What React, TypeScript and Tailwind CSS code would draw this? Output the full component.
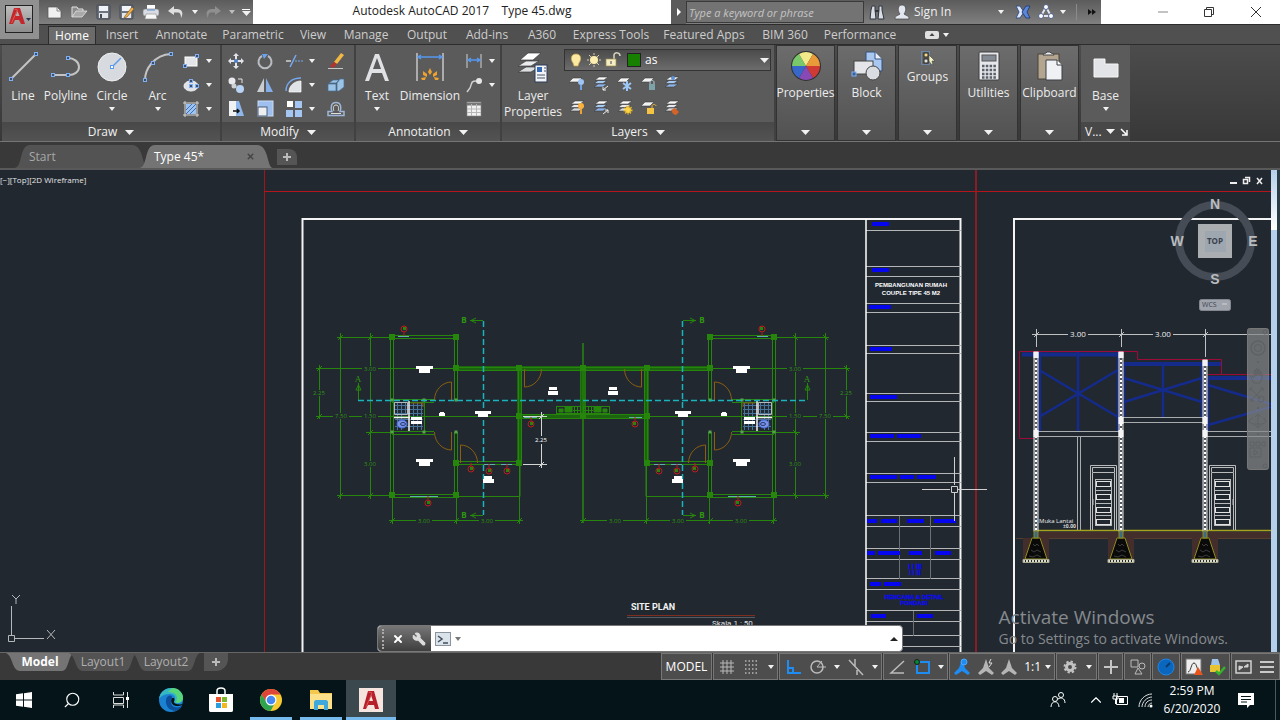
import type { ReactNode } from "react";
import { ChevronUp, Search, Wrench, X } from "lucide-react";

type Kids = { children: ReactNode };

function Icon({ size = 18, children }: Kids & { size?: number }) {
  return (
    <svg width={size} height={size} viewBox={`0 0 ${size} ${size}`} fill="none" className="shrink-0" aria-hidden="true">
      {children}
    </svg>
  );
}

function Caret({ wide = false }: { wide?: boolean }) {
  return (
    <svg width={wide ? 9 : 6} height={wide ? 5 : 4} viewBox="0 0 6 4" preserveAspectRatio="none" className="shrink-0" aria-hidden="true">
      <path d="M0 0h6L3 4z" fill="#f2f2f2" />
    </svg>
  );
}

/* ---------- small shapes shared by the ribbon icons ---------- */

function Grip({ x, y }: { x: number; y: number }) {
  return <rect x={x - 1.5} y={y - 1.5} width="3" height="3" fill="#3c4f70" stroke="#7fb0f5" />;
}

function Sheets({ blue = false }: { blue?: boolean }) {
  return (
    <g stroke="#3c3c3c" strokeWidth="0.6">
      <path d="M2 13l4-3h9l-4 3z" fill={blue ? "#8db4e8" : "#d5d9de"} />
      <path d="M2 9.500l4-3h9l-4 3z" fill={blue ? "#a9c8ef" : "#e6e8eb"} />
      <path d="M3 6l4-3h9l-4 3z" fill="#fafafa" />
    </g>
  );
}

function Sheet() {
  return <path d="M1 8l4-4h9l-4 4z" fill="#f2f2f2" stroke="#3c3c3c" strokeWidth="0.6" />;
}

/* ---------- title bar ---------- */

const quickAccess: { name: string; icon: ReactNode }[] = [
  {
    name: "New",
    icon: <Icon><path d="M2 4h9l4 4v7H2z" fill="#f0f0f0" stroke="#555" strokeWidth="0.7" /><path d="M11 4v4h4" stroke="#8a8a8a" /></Icon>,
  },
  {
    name: "Open",
    icon: <Icon><path d="M2 14V4h5l1 2h5v3" fill="#8b8b8b" stroke="#e2e2e2" /><path d="M2 14l4-6h11l-5 6z" fill="#a9a9a9" stroke="#ececec" strokeWidth="0.7" /></Icon>,
  },
  {
    name: "Save",
    icon: <Icon><rect x="3" y="2" width="13" height="14" rx="1" fill="#6e7580" stroke="#454b55" /><rect x="5" y="3" width="9" height="5" fill="#f0f3f8" /><rect x="5" y="10" width="9" height="5" fill="#e3e6ea" /><path d="M7 11v4" stroke="#454b55" strokeWidth="2" /></Icon>,
  },
  {
    name: "Save As",
    icon: <Icon><rect x="2" y="2" width="13" height="14" rx="1" fill="#6e7580" stroke="#454b55" /><rect x="4" y="3" width="9" height="5" fill="#f0f3f8" /><rect x="4" y="10" width="9" height="5" fill="#e3e6ea" /><path d="M7 13l7-9 2 2-7 8-3 1z" fill="#efb046" stroke="#7b501c" strokeWidth="0.6" /></Icon>,
  },
  {
    name: "Plot",
    icon: <Icon><path d="M5 2h8v5H5z" fill="#fff" /><rect x="1" y="6" width="16" height="7" rx="2" fill="#d9dde3" stroke="#777" strokeWidth="0.6" /><path d="M4 11h10l1 5H3z" fill="#f7f7f7" stroke="#888" strokeWidth="0.6" /><path d="M5 7h8" stroke="#5d8ad0" /></Icon>,
  },
  {
    name: "Undo",
    icon: <Icon><path d="M8 3L2 8l6 4V9.500h4c2 0 3 2 3 5.500 3-5 1-9-4-9H8z" fill="#dedede" /></Icon>,
  },
];

function TitleBar() {
  return (
    <div className="flex h-6 items-stretch bg-white">
      <div className="flex shrink-0 items-center bg-gradient-to-b from-[#5c5c5c] to-[#808080] pl-1">
        {quickAccess.map((q) => (
          <button key={q.name} aria-label={q.name} className="flex w-6 justify-center">
            {q.icon}
          </button>
        ))}
        <button aria-label="Undo list" className="flex w-4 justify-center"><Caret /></button>
        <button aria-label="Redo" className="flex w-5 justify-center">
          <Icon><path d="M11 3l6 5-6 4V9.500H7c-2 0-3 2-3 5.500C1 10 3 6 8 6h3z" fill="#8f8f8f" /></Icon>
        </button>
        <button aria-label="Redo list" className="flex w-3 justify-end opacity-60"><Caret /></button>
        <button aria-label="Customize toolbar" className="flex w-[18px] flex-col items-center gap-px pl-1">
          <span className="h-px w-2 bg-white" />
          <Caret wide />
        </button>
      </div>
      <h1 className="flex-1 text-center text-[12px] leading-[22px] whitespace-pre text-[#222]">Autodesk AutoCAD 2017    Type 45.dwg</h1>
      <div className="flex w-[430px] shrink-0 items-center bg-gradient-to-b from-[#5c5c5c] to-[#808080]">
        <button aria-label="Collapse search" className="flex h-full w-[15px] items-center justify-center bg-[#5b5b5b]">
          <Icon size={8}><path d="M2 0l4 4-4 4z" fill="#fff" /></Icon>
        </button>
        <input
          aria-label="Search"
          placeholder="Type a keyword or phrase"
          className="h-[22px] w-[178px] border border-[#3a3a3a] bg-[#737373] px-[2px] text-[11px] italic text-white placeholder:text-[#c4c4c4]"
        />
        <button aria-label="Find" className="ml-1">
          <Icon size={18}>
            <path d="M4 3h3v4l1 9H2l1-9zM11 3h3v4l2 9h-6l1-9z" fill="#dadde3" stroke="#31363f" />
            <path d="M7 8h4" stroke="#31363f" strokeWidth="2" />
          </Icon>
        </button>
        <button className="ml-[7px] flex items-center gap-[3px] text-[12px] text-[#f0f0f0]">
          <Icon>
            <path d="M2 16c0-4 3-3 5-5C4 7 5 2 9 2s5 5 2 9c2 2 5 1 5 5z" fill="#e2e6ee" stroke="#444" strokeWidth="0.7" />
          </Icon>
          Sign In
        </button>
        <div className="flex-1" />
        <Caret />
        <button aria-label="Exchange" className="ml-[10px]">
          <Icon>
            <path d="M2 3h4l4 6-4 6H2l3-6z" fill="#dfe8f8" stroke="#34508c" />
            <path d="M16 3h-4L8 9l4 6h4l-3-6z" fill="#5c86d8" stroke="#27417c" />
          </Icon>
        </button>
        <button aria-label="A360" className="mx-[5px]">
          <Icon>
            <path d="M9 4l5 9H4z" stroke="#dfe6f5" strokeWidth="2" />
            <circle cx="9" cy="4" r="2.500" fill="#fff" stroke="#4d628e" />
            <circle cx="4" cy="13" r="2.500" fill="#fff" stroke="#4d628e" />
            <circle cx="14" cy="13" r="2.500" fill="#fff" stroke="#4d628e" />
          </Icon>
        </button>
        <Caret />
        <span className="mx-[10px] h-4 w-px bg-[#8b8b8b]" />
        <button aria-label="More" className="mr-1">
          <Icon size={10}><path d="M1 2l4 3-4 3zM5 2l4 3-4 3z" fill="#111" /></Icon>
        </button>
      </div>
      <div className="flex w-[179px] shrink-0 items-center justify-end text-[#333]">
        <button aria-label="Minimize" className="flex w-[46px] justify-center"><Icon size={12}><path d="M1 6h10" stroke="#888" /></Icon></button>
        <button aria-label="Restore" className="flex w-[46px] justify-center">
          <Icon size={12}><path d="M1.500 3.500h7v7h-7zM3.500 3.500v-2h7v7h-2" stroke="#333" /></Icon>
        </button>
        <button aria-label="Close" className="flex w-[48px] justify-center"><Icon size={12}><path d="M1 1l10 10M11 1L1 11" stroke="#333" /></Icon></button>
      </div>
    </div>
  );
}

const ribbonTabs = [
  { name: "Insert", width: "w-[52px]" },
  { name: "Annotate", width: "w-[67px]" },
  { name: "Parametric", width: "w-[76px]" },
  { name: "View", width: "w-[44px]" },
  { name: "Manage", width: "w-[62px]" },
  { name: "Output", width: "w-[60px]" },
  { name: "Add-ins", width: "w-[60px]" },
  { name: "A360", width: "w-[50px]" },
  { name: "Express Tools", width: "w-[88px]" },
  { name: "Featured Apps", width: "w-[98px]" },
  { name: "BIM 360", width: "w-[64px]" },
  { name: "Performance", width: "w-[86px]" },
];

function Header() {
  return (
    <header className="flex shrink-0 bg-[#505050]">
      <div className="h-[39px] w-[39px] shrink-0 bg-[#909090] p-[5px]">
        <button aria-label="Application menu" className="flex h-7 w-7 items-center border border-[#222] bg-gradient-to-b from-[#bdbdbd] to-[#8d8d8d]">
          <Icon size={26}>
            <path d="M3 18L8 2h6l5 16h-4l-2-4H9l-2 4z" fill="#c3262c" />
            <path d="M9.500 10l2-5 2 5z" fill="#b0b0b0" />
            <path d="M8.500 3l3 1-6 13" stroke="#e05a55" />
            <path d="M20 12h5l-2.500 3z" fill="#27324a" />
          </Icon>
        </button>
      </div>
      <div className="min-w-0 flex-1">
        <TitleBar />
        <nav className="flex h-5 items-end border-t border-[#2c2c2c] pl-[9px] text-[12px] leading-[18px] text-[#cdcdcd]">
          <button className="h-[18px] w-12 border border-b-0 border-[#2c2c2c] bg-[#6b6b6b] leading-4 text-white">Home</button>
          {ribbonTabs.map((t) => (
            <button key={t.name} className={`h-[18px] whitespace-nowrap ${t.width}`}>{t.name}</button>
          ))}
          <button aria-label="Ribbon display" className="ml-[22px] flex h-[18px] items-center gap-1">
            <Icon size={14}><rect y="3" width="14" height="8" rx="2" fill="#e0e0e0" /><path d="M7 5l2.500 3h-5z" fill="#444" /></Icon>
            <Caret />
          </button>
        </nav>
      </div>
    </header>
  );
}

/* ---------- ribbon ---------- */

function Panel({ title, width, children }: Kids & { title: string; width: string }) {
  return (
    <section className={`flex shrink-0 flex-col border-r-2 border-[#414141] bg-[#5b5b5b] ${width}`}>
      <div className="flex flex-1 pt-1">{children}</div>
      <button className="flex h-[19px] items-center justify-center gap-2 bg-gradient-to-b from-[#484848] to-[#535353] pt-px text-[12px] text-[#f0f0f0]">
        {title} <Caret wide />
      </button>
    </section>
  );
}

function BigTool({ label, width, caret, children }: Kids & { label: string; width: string; caret?: boolean }) {
  return (
    <button className={`flex shrink-0 flex-col items-center pt-[2px] text-[12px] text-[#ececec] ${width}`}>
      {children}
      <span className="mt-[5px] leading-4">{label}</span>
      {caret && <span className="mt-[3px] flex"><Caret /></span>}
    </button>
  );
}

function Tool({ name, caret, children }: Kids & { name: string; caret?: boolean }) {
  return (
    <button aria-label={name} className="flex h-6 items-center gap-1.5">
      <Icon>{children}</Icon>
      {caret && <Caret />}
    </button>
  );
}

function DrawPanel() {
  return (
    <Panel title="Draw" width="w-[220px]">
      <BigTool label="Line" width="w-[42px]">
        <Icon size={32}><path d="M4 28L29 3" stroke="#c4c4c4" strokeWidth="2" /><Grip x={4} y={28} /><Grip x={29} y={3} /></Icon>
      </BigTool>
      <BigTool label="Polyline" width="w-[43px]">
        <Icon size={32}>
          <path d="M3 24h16c5 0 10-3 10-8s-5-9-11-9" stroke="#c4c4c4" strokeWidth="2" />
          <Grip x={3} y={24} /><Grip x={18} y={24} /><Grip x={18} y={7} />
        </Icon>
      </BigTool>
      <BigTool label="Circle" width="w-[50px]" caret>
        <Icon size={32}>
          <circle cx="16" cy="16" r="14" fill="#d7dade" stroke="#eef0f2" />
          <path d="M16 16l9-9" stroke="#5b9bea" strokeWidth="1.500" />
          <rect x="14.500" y="14.500" width="3" height="3" fill="#fff" stroke="#5b9bea" />
        </Icon>
      </BigTool>
      <BigTool label="Arc" width="w-[41px]" caret>
        <Icon size={32}>
          <path d="M3 29C3 18 12 4 29 3" stroke="#c4c4c4" strokeWidth="2" />
          <Grip x={3} y={29} /><Grip x={11} y={12} /><Grip x={29} y={3} />
        </Icon>
      </BigTool>
      <div className="ml-1">
        <Tool name="Rectangle" caret><rect x="3" y="5" width="12" height="9" fill="#e3e5e8" stroke="#fff" /><Grip x={3} y={14} /><Grip x={15} y={4} /></Tool>
        <Tool name="Ellipse" caret><ellipse cx="9" cy="10" rx="7" ry="5" fill="#dfe2e6" stroke="#f3f3f3" /><Grip x={9} y={5} /><Grip x={9} y={10} /><Grip x={15} y={10} /></Tool>
        <Tool name="Hatch" caret>
          <rect x="4" y="4" width="10" height="10" fill="#9fc3ef" />
          <path d="M4 10l6-6M4 14L14 4M8 14l6-6" stroke="#3d6fb8" />
          <path d="M3 1v16M15 1v16M1 3h16M1 15h16" stroke="#d6d6d6" />
        </Tool>
      </div>
    </Panel>
  );
}

function ModifyPanel() {
  return (
    <Panel title="Modify" width="w-[134px]">
      <div className="grid h-[72px] grid-cols-[29px_29px_42px_24px] pl-[5px]">
        <Tool name="Move"><path d="M9 1l3 3h-2v4h4V6l3 3-3 3v-2h-4v4h2l-3 3-3-3h2v-4H4v2L1 9l3-3v2h4V4H6z" fill="#e0e3e8" /><circle cx="9" cy="9" r="2" fill="#4e7fc8" /></Tool>
        <Tool name="Rotate"><path d="M6 4a6.500 6.500 0 1 0 6 0" stroke="#b9bcc1" strokeWidth="2" /><path d="M6 2h6l-4 5z" fill="#6ba2ef" /></Tool>
        <Tool name="Trim" caret><path d="M1 9h5" stroke="#d5d5d5" strokeWidth="1.500" /><path d="M10 9h8" stroke="#77a9ef" strokeDasharray="2 1" /><path d="M5 15L11 3" stroke="#77a9ef" strokeWidth="1.500" /></Tool>
        <Tool name="Erase"><path d="M7 10l7-9 3 2-7 9z" fill="#f1b944" /><path d="M3 14l4-4 3 2-4 4z" fill="#b4332c" /><path d="M1 16.500h15" stroke="#c7c7c7" /></Tool>
        <Tool name="Copy"><circle cx="5" cy="5" r="3.500" fill="#e8eaed" /><circle cx="13" cy="13" r="4" fill="#b9d3f4" /><circle cx="7" cy="10" r="2.500" fill="#cfd2d6" /><path d="M11 3h4v4" stroke="#e6e6e6" /></Tool>
        <Tool name="Mirror"><path d="M8 2v14H1z" fill="#c9ccd0" /><path d="M10 2v14h7z" fill="#85aee8" /></Tool>
        <Tool name="Fillet" caret><path d="M1 15C1 7 7 2 16 2" stroke="#75a7ee" strokeWidth="1.500" /><path d="M4 16C4 10 9 5 16 5v11z" fill="#dfe2e6" stroke="#fff" strokeWidth="0.700" /></Tool>
        <Tool name="Explode"><path d="M2 7l4-3h6l-3 3zM1 8h8v7H1zM10 7l3-4h4v8l-5 4h-2z" fill="#9bc3e6" stroke="#456f94" strokeWidth="0.700" /></Tool>
        <Tool name="Stretch"><path d="M2 1h7v15H2z" fill="#f0f1f3" /><path d="M9 1h3l5 15H9z" fill="#8fb7ec" /><path d="M6 11h6M10 9l2 2-2 2" stroke="#111" strokeWidth="1.500" /></Tool>
        <Tool name="Scale"><rect x="2" y="1" width="15" height="15" fill="#9fc0ee" stroke="#ccdcf3" /><rect x="2" y="7" width="9" height="9" fill="#eceef0" stroke="#4a5d7a" /></Tool>
        <Tool name="Array" caret><rect x="2" y="1" width="6" height="6" fill="#fff" /><rect x="10" y="1" width="7" height="7" fill="#a5c6f2" /><rect x="1" y="10" width="7" height="7" fill="#a5c6f2" /><rect x="10" y="10" width="7" height="7" fill="#a5c6f2" /></Tool>
        <Tool name="Offset"><path d="M1 15.500h16v-4h-4c1-2 2-9-4-9s-5 7-4 9H1z" stroke="#9fb6d6" strokeWidth="1.500" /><path d="M4 13.500h10M7 11c-1-2-1-6 2-6s3 4 2 6" stroke="#ddd" /></Tool>
      </div>
    </Panel>
  );
}

function AnnotationPanel() {
  return (
    <Panel title="Annotation" width="w-[146px]">
      <BigTool label="Text" width="w-[42px]" caret>
        <Icon size={32}><path d="M4 30L14 3h4l10 27h-4l-3-8H11l-3 8zM12 18h8L16 7z" fill="#dfe1e4" fillRule="evenodd" /></Icon>
      </BigTool>
      <BigTool label="Dimension" width="w-[64px]">
        <Icon size={32}>
          <path d="M3 2v28M29 2v28" stroke="#c8c8c8" strokeWidth="1.500" />
          <path d="M4 6h24M7 4L4 6l3 2M25 4l3 2-3 2" stroke="#5698ef" strokeWidth="1.500" />
          <path d="M16 17l2 4-2 3-2-3zM9 20l4 3v3l-4-2zM23 20l-4 3v3l4-2zM7 27l5-1-1 3H8zM25 27l-5-1 1 3h3z" fill="#efa22e" />
        </Icon>
      </BigTool>
      <div className="ml-[3px]">
        <Tool name="Linear" caret><path d="M2 2v14M16 2v14" stroke="#d2d2d2" /><path d="M3 8h12M6 6L3 8l3 2M12 6l3 2-3 2" stroke="#5698ef" strokeWidth="1.500" /></Tool>
        <Tool name="Leader" caret><circle cx="14" cy="5" r="3" fill="#e7e7e7" /><path d="M11 5c-5 0-4 2-6 7l-3 4" stroke="#cfcfcf" strokeWidth="1.500" /></Tool>
        <Tool name="Table"><rect x="2" y="2" width="14" height="14" fill="#f1f1f1" stroke="#888" strokeWidth="0.600" /><path d="M2 4h14" stroke="#777" strokeWidth="3" /><path d="M2 9h14M2 12.500h14M6.500 4v12M11.500 4v12" stroke="#b5b5b5" /></Tool>
      </div>
    </Panel>
  );
}

function LayersPanel() {
  return (
    <Panel title="Layers" width="w-[274px]">
      <BigTool label="Layer Properties" width="w-[62px]">
        <Icon size={32}>
          <g stroke="#3b3b3b" strokeWidth="0.700">
            <path d="M1 21l8-5h13l-8 5z" fill="#dcdfe2" />
            <path d="M1 15l8-5h13l-8 5z" fill="#e9ebed" />
            <path d="M3 9l8-7h13l-8 7z" fill="#fff" />
          </g>
          <rect x="18" y="14" width="12" height="17" fill="#f2f4f7" stroke="#2d3d57" />
          <rect x="20" y="16" width="5" height="5" fill="#3469b5" />
          <path d="M27 17h2M27 20h2M20 24h8M20 27h8" stroke="#46556c" />
        </Icon>
      </BigTool>
      <div className="min-w-0 flex-1 pr-[3px]">
        <div className="flex h-[22px] items-center gap-1 border border-[#333] bg-gradient-to-b from-[#4b4b4b] to-[#6c6c6c] pr-px pl-1 text-white">
          <Icon size={14}><path d="M4 10C1 6 2 1 7 1s6 5 3 9l-1 3H5z" fill="#fbe9a3" stroke="#c5a447" strokeWidth="0.700" /></Icon>
          <Icon size={14}><circle cx="7" cy="7" r="4" fill="#fbeeb0" /><path d="M7 0v2M7 12v2M0 7h2M12 7h2M2 2l2 2M10 10l2 2M12 2l-2 2M2 12l2-2" stroke="#d9d1a2" /></Icon>
          <Icon size={18}><path d="M9 8V4c0-3 6-3 6 1" stroke="#d9d4bd" strokeWidth="1.500" /><rect x="1" y="8" width="10" height="7" fill="#f5eec5" stroke="#9c8d4c" strokeWidth="0.700" /><path d="M6 10v3" stroke="#444" /></Icon>
          <span className="h-[14px] w-[14px] border border-[#222] bg-[#178000]" />
          <select aria-label="Current layer" className="h-5 flex-1 appearance-none bg-transparent text-[12px] text-white">
            <option>as</option>
          </select>
          <Caret wide />
        </div>
        <div className="grid grid-cols-[24px_24px_24px_23px_24px] pl-1">
          <Tool name="Layer off"><Sheet /><circle cx="13" cy="8" r="3" fill="#9ec5f5" /><path d="M13 11v5" stroke="#6fa1e8" strokeWidth="2" /></Tool>
          <Tool name="Isolate layer"><Sheets blue /><path d="M16 12l-5 4M11 13v3h3" stroke="#eee" /></Tool>
          <Tool name="Freeze layer"><Sheet /><path d="M11 7v10M7 9l8 6M15 9l-8 6" stroke="#9cc6f5" strokeWidth="2" /></Tool>
          <Tool name="Lock layer"><Sheet /><path d="M10 10V8c0-2 4-2 4 0v2" stroke="#b6cbd2" /><rect x="9" y="10" width="6" height="6" fill="#7da3aa" /></Tool>
          <Tool name="Make current"><Sheets blue /><circle cx="10" cy="4" r="2" fill="#5d92de" /></Tool>
          <Tool name="Turn all on"><Sheets /><circle cx="13" cy="8" r="3" fill="#fbb13c" /><path d="M13 11v5" stroke="#f0a02e" strokeWidth="2" /></Tool>
          <Tool name="Unisolate layer"><Sheets blue /><path d="M11 16l5-4M13 12h3v3" stroke="#eee" /></Tool>
          <Tool name="Thaw all"><Sheets /><circle cx="12" cy="12" r="3" fill="#ffd94a" stroke="#f3c02b" strokeDasharray="1 1" strokeWidth="3" /></Tool>
          <Tool name="Unlock layer"><Sheet /><path d="M12 10V8c0-2 4-2 4 0" stroke="#e2b53a" /><rect x="7" y="10" width="7" height="6" fill="#f4c343" /></Tool>
          <Tool name="Match layer"><Sheets /><path d="M8 12l4-2 4 4-3 3c-2 0-4-2-5-5z" fill="#d2642a" /></Tool>
        </div>
      </div>
    </Panel>
  );
}

const wheel = [
  { d: "M0 0L-14 0A14 14 0 0 1 -7 -12Z", fill: "#79c86a" },
  { d: "M0 0L-7 -12A14 14 0 0 1 7 -12Z", fill: "#f2e98a" },
  { d: "M0 0L7 -12A14 14 0 0 1 14 0Z", fill: "#eb9a3a" },
  { d: "M0 0L14 0A14 14 0 0 1 7 12Z", fill: "#cf3a34" },
  { d: "M0 0L7 12A14 14 0 0 1 -7 12Z", fill: "#8949b5" },
  { d: "M0 0L-14 0A14 14 0 0 0 -7 12Z", fill: "#3767c9" },
];

const collapsed: { name: string; icon: ReactNode }[] = [
  {
    name: "Properties",
    icon: (
      <Icon size={32}>
        <circle cx="16" cy="16" r="15" fill="#303030" />
        <g transform="translate(16 16)">{wheel.map((w) => <path key={w.fill} d={w.d} fill={w.fill} />)}</g>
      </Icon>
    ),
  },
  {
    name: "Block",
    icon: (
      <Icon size={32}>
        <path d="M15 2h9l7 7v12H15z" fill="#a9c8f1" stroke="#33507c" /><path d="M24 2v7h7" fill="#e9f0fb" stroke="#33507c" />
        <rect x="3" y="11" width="19" height="13" fill="#e3e5e9" stroke="#444" /><circle cx="22" cy="23" r="7" fill="#d9dce0" stroke="#444" />
        <rect x="1" y="22" width="4" height="4" fill="#3c5f94" stroke="#7fb0f5" />
      </Icon>
    ),
  },
  {
    name: "Groups",
    icon: (
      <Icon size={16}>
        <rect x="1.500" y="1.500" width="8" height="13" stroke="#6fa4ea" strokeDasharray="1 1" />
        <rect x="4" y="3" width="4" height="4" fill="#f3d98c" stroke="#222" /><rect x="4" y="9" width="4" height="4" fill="#e4e4e4" stroke="#222" />
        <path d="M9 5l6 6h-3l1 4-2-1-2-3z" fill="#f5f2c4" stroke="#444" strokeWidth="0.600" />
      </Icon>
    ),
  },
  {
    name: "Utilities",
    icon: (
      <Icon size={32}>
        <rect x="6" y="2" width="20" height="28" rx="1" fill="#e6e7ea" stroke="#3e3e3e" />
        <rect x="9" y="5" width="14" height="6" fill="#858b95" stroke="#555" />
        <path d="M9 16h14M9 20h14M9 24h14M9 27.500h14" stroke="#5a5f68" strokeWidth="2.500" strokeDasharray="2.500 1.300" />
      </Icon>
    ),
  },
  {
    name: "Clipboard",
    icon: (
      <Icon size={32}>
        <rect x="4" y="4" width="21" height="25" fill="#b3a58f" stroke="#4a453c" /><path d="M9 5c0-2 3-1 4-3h3c1 2 4 1 4 3z" fill="#eee" stroke="#444" />
        <path d="M12 10h11l5 5v15H12z" fill="#eff1f4" stroke="#3b3f46" /><path d="M23 10v5h5" fill="#fff" stroke="#3b3f46" />
      </Icon>
    ),
  },
];

function Ribbon() {
  return (
    <div className="flex h-[98px] shrink-0 border-y border-t-[#2c2c2c] border-b-[#757575] bg-gradient-to-b from-[#4c4c4c] to-[#383838] pl-[2px]">
      <DrawPanel />
      <ModifyPanel />
      <AnnotationPanel />
      <LayersPanel />
      {collapsed.map((c) => (
        <button
          key={c.name}
          className="mr-[2px] flex w-[59px] shrink-0 flex-col items-center border border-[#333] bg-gradient-to-b from-[#6c6c6c] to-[#525252] pt-1 pb-[5px] text-[12px] text-[#ececec]"
        >
          {c.icon}
          <span className="mt-[3px] leading-4">{c.name}</span>
          <span className="flex-1" />
          <Caret wide />
        </button>
      ))}
      <section className="flex w-[49px] shrink-0 flex-col bg-[#5b5b5b]">
        <div className="flex flex-1 justify-center pt-1">
          <BigTool label="Base" width="w-[46px]" caret>
            <Icon size={32}><path d="M4 8h11v5h13v13H4z" fill="#e3e4e8" stroke="#f6f6f6" /></Icon>
          </BigTool>
        </div>
        <div className="flex h-[19px] items-center gap-1 bg-[#484848] pl-1 text-[12px] text-[#f0f0f0]">
          V... <Caret wide />
          <Icon size={10}><path d="M2 2l5 5M8 3v5H3" stroke="#fff" strokeWidth="1.500" /></Icon>
        </div>
      </section>
    </div>
  );
}

/* ---------- file tabs ---------- */

function FileTab({ label, active }: { label: string; active?: boolean }) {
  return (
    <button className={`relative -ml-[9px] flex h-[23px] w-[134px] items-center justify-between pr-[18px] pl-[15px] text-[12px] ${active ? "text-white" : "text-[#a8a8a8]"}`}>
      <svg viewBox="0 0 134 22" preserveAspectRatio="none" className="absolute inset-0 h-full w-full" aria-hidden="true">
        <path d="M0 22C9 22 5 0 16 0h102c12 0 10 22 16 22z" fill={active ? "#747474" : "#535353"} />
      </svg>
      <span className="relative">{label}</span>
      {active && <X size={9} strokeWidth={4} className="relative text-[#444]" />}
    </button>
  );
}

function FileTabs() {
  return (
    <div className="flex h-7 shrink-0 items-end border-b-2 border-[#595959] bg-[#393939] pl-[23px]">
      <FileTab label="Start" />
      <FileTab label="Type 45*" active />
      <button aria-label="New drawing" className="mb-[3px] ml-1 flex h-4 w-5 items-center justify-center rounded-tr-lg bg-[#555]">
        <Icon size={10}><path d="M5 1v8M1 5h8" stroke="#bbb" strokeWidth="2" /></Icon>
      </button>
    </div>
  );
}

/* ---------- model space ---------- */

const GREEN = "#26860c";
const columns = [[392, 337], [456, 337], [456, 368], [519, 368], [519, 416], [583, 368], [583, 416], [456, 463], [519, 463], [392, 495], [456, 495]];
const smallColumns = [[392, 400], [424, 400], [456, 400], [392, 432], [424, 432], [456, 432]];
const lamps = [[404, 329, 7], [531, 424, -7], [471, 469, -6], [489, 471, -7], [507, 471, -7], [428, 503, -7]];
const roomLabels = [
  [416, 366, 17, 3], [419, 369, 11, 4], [549, 387, 8, 3], [548, 391, 10, 4], [475, 411, 16, 3], [478, 414, 10, 3],
  [440, 412, 4, 2], [439, 413, 6, 3], [416, 459, 17, 3], [419, 462, 11, 4], [484, 476, 8, 4], [483, 479, 11, 4],
  [411, 417, 11, 3], [411, 421, 11, 3],
];

// One dwelling; the neighbour is the same plan mirrored on the party wall.
function House() {
  return (
    <g fill="none" stroke={GREEN}>
      <path d="M319.500 365v54M340.500 333v166M370.500 333v166M337 337.500h55M316 368.500h140M316 416.500h203M366 432.500h26M337 495.500h55" />
      <path d="M392.500 498v26M456.500 498v26M519.500 465v59M456 496.500h64v-33" />
      <path d="M317 371l5-5M317 419l5-5M338 340l5-5M338 498l5-5M368 340l5-5M368 371l5-5M368 435l5-5M368 498l5-5" />
      <path d="M390.500 337v158M393.500 337v158M454.500 337v63M457.500 337v63M454.500 432v63M457.500 432v63M392 335.500h64M392 338.500h64M392 494.500h64M392 497.500h64M392 399.500h42M392 402.500h42M392 431.500h42M392 434.500h42M424.500 400v32M456 461.500h63M456 464.500h63" />
      <path d="M456 368.500h127M519.500 368v95M519 416.500h64M582.500 368v48" strokeWidth="5" stroke="#1d6410" />
      <path d="M456 367.500h127M456 370.500h127M518.500 368v95M521.500 368v95M519 414.500h64M519 418.500h64M583 343v180M581 368v48" />
      <rect x="556.500" y="406.500" width="26" height="7" />
      <path d="M559 409h4v3h-4zM565 407h7v5h-7z" fill={GREEN} />
      <path d="M574.500 407v6M577.500 407v6M580.500 407v6M573 410.500h10" />
      <g fill={GREEN} stroke="none">
        {columns.map(([x, y]) => <rect key={`${x}-${y}`} x={x - 3} y={y - 3} width="6" height="6" />)}
      </g>
      <g fill="#5aa24c" stroke="none">
        {smallColumns.map(([x, y]) => <rect key={`${x}-${y}`} x={x - 1.500} y={y - 1.500} width="3" height="3" />)}
      </g>
      {/* bathroom */}
      <path d="M395 405.500h28M395 409.500h28M395 413.500h28M397.500 403v27M401.500 403v27M405.500 403v12M413.500 403v27M417.500 403v27M421.500 403v27M395 419.500h28M395 426.500h28" stroke="#47729c" />
      <path d="M394.500 402.500h13v12h-13z" stroke="#b5b9bd" />
      <path d="M409 401v30M394 417.500h16" stroke="#f0f0f0" strokeWidth="1.500" />
      <ellipse cx="402" cy="424" rx="5" ry="4" fill="#7a92e8" stroke="#4566d8" />
      <ellipse cx="403" cy="424" rx="2.500" ry="1.500" stroke="#26386e" />
      {/* doors */}
      <path d="M451.500 400v-18c-9 0-17 8-17 18M451.500 432v18c-9 0-17-8-17-18M460.500 463v-18c9 0 17 8 17 18M524.500 369v18c9 0 17-8 17-18M411 403h12v4" stroke="#8a5f10" />
      {/* windows */}
      <path d="M398 336.500h11M524 417.500h13M484 464.500h11M501 464.500h11M410 496.500h28" stroke="#5fb0b0" />
      {lamps.map(([x, y, stem]) => (
        <g key={`${x}-${y}`}>
          <circle cx={x} cy={y} r="3" stroke="#c21a1a" />
          <rect x={x - 1} y={y - 2} width="3" height="3" fill={GREEN} stroke="none" />
          <path d={`M${x} ${y + stem / 2}v${stem / 2}`} stroke="#c21a1a" />
        </g>
      ))}
      {/* section marks */}
      <path d="M483.500 321v194" stroke="#1bb4bc" strokeWidth="1.500" strokeDasharray="6 3" />
      <path d="M470 320.500h13M470 515.500h13M476 318l-5 2.500 5 2.500M476 513l-5 2.500 5 2.500M358.500 400v-17M356 390l2.500-5 2.500 5z" />
      <g fill="#fff" stroke="none">
        {roomLabels.map(([x, y, w, h]) => <rect key={`${x}-${y}`} x={x} y={y} width={w} height={h} />)}
      </g>
    </g>
  );
}

const dimTexts: [number, number, string][] = [
  [370, 369, "3.00"], [319, 393, "2.25"], [341, 416, "7.50"], [370, 416, "1.50"], [370, 464, "3.00"], [424, 521, "3.00"], [487, 521, "3.00"],
  [795, 369, "3.00"], [846, 393, "2.25"], [825, 416, "7.50"], [795, 416, "1.50"], [795, 464, "3.00"], [615, 521, "3.00"], [678, 521, "3.00"], [741, 521, "3.00"],
];

function FloorPlan() {
  return (
    <g>
      <House />
      <g transform="translate(1166 0) scale(-1 1)"><House /></g>
      <path d="M358 400.500h450" stroke="#1bb4bc" strokeWidth="1.500" strokeDasharray="6 3" />
      <path d="M389 520.500h134M580 520.500h197M390 523l5-5M454 523l5-5M517 523l5-5M581 523l5-5M644 523l5-5M708 523l5-5M771 523l5-5" stroke={GREEN} />
      <g fontSize="6" textAnchor="middle" fill="#2f960f">
        {dimTexts.map(([x, y, t]) => (
          <g key={`${x}-${y}`}>
            <rect x={x - 8} y={y - 3} width="16" height="6" fill="#212830" />
            <text x={x} y={y + 2}>{t}</text>
          </g>
        ))}
        <g fontSize="8" fontWeight="bold">
          <text x="464" y="323">B</text><text x="464" y="518">B</text><text x="702" y="323">B</text><text x="702" y="518">B</text>
        </g>
        <g fontSize="9" fontFamily="Liberation Serif, serif">
          <text x="358" y="382">A</text><text x="807" y="382">A</text>
        </g>
      </g>
      <path d="M541.500 412v56M523 416.500h24M523 464.500h24M539 419l5-5M539 467l5-5" stroke="#d5d5d5" />
      <rect x="534" y="436" width="15" height="8" fill="#212830" />
      <text x="541" y="442" fontSize="6" textAnchor="middle" fill="#fff">2.25</text>
      <text x="631" y="610" fontSize="9" fontWeight="bold" fill="#f2f2f2" fontFamily="Roboto, Liberation Sans, sans-serif">SITE PLAN</text>
      <path d="M627 615.500h128" stroke="#7e2d1f" />
      <path d="M627 617.500h128" stroke="#555b61" />
      <text x="712" y="626" fontSize="8" fill="#e0e0e0" fontFamily="Roboto, Liberation Sans, sans-serif">Skala  1 : 50</text>
    </g>
  );
}

const rules = [230, 266, 276, 303, 312, 345, 353, 393, 401, 432, 441, 473, 482, 515, 526, 548, 559, 578, 589, 610, 621, 635, 646];
const bars = [
  [872, 222, 17], [872, 268, 17], [869, 305, 22], [870, 347, 22], [870, 395, 27], [870, 434, 24], [897, 434, 24], [870, 475, 27],
  [900, 475, 14], [917, 475, 19], [867, 519, 10], [881, 519, 16], [907, 519, 17], [934, 519, 22], [867, 551, 8], [878, 551, 22],
  [909, 551, 13], [935, 551, 16], [870, 582, 11], [884, 582, 17], [871, 614, 15], [917, 614, 16],
];

function TitleBlock() {
  return (
    <g>
      <path d={rules.map((y) => `M866 ${y}.5h95`).join("")} stroke="#b4b6b8" />
      <path d="M899.500 516v63M930.500 516v63M913.500 611v25" stroke="#6c7074" />
      <path d="M866 219v440" stroke="#fff" strokeWidth="1.500" />
      {bars.map(([x, y, w]) => <rect key={`${x}-${y}`} x={x} y={y} width={w} height="4" fill="#0505f0" />)}
      <g fontSize="6" textAnchor="middle" fontWeight="bold" fontFamily="Liberation Sans, sans-serif">
        <text x="911" y="287" fill="#fff">PEMBANGUNAN RUMAH</text>
        <text x="911" y="295" fill="#fff">COUPLE TIPE 45 M2</text>
        <g fill="#0b0bf0" stroke="#0b0bf0" strokeWidth="0.300">
          <text x="915" y="569" fontSize="7">I I III</text><text x="915" y="575" fontSize="7">I I II</text>
          <text x="914" y="599">RENCANA &amp; DETAIL</text><text x="914" y="605">PONDASI</text>
        </g>
      </g>
    </g>
  );
}

function Footing({ x }: { x: number }) {
  return (
    <g>
      <rect x={x - 13} y="538" width="26" height="21" fill="#442e2c" />
      <path d={`M${x - 4} 538h8l7 21h-22z`} fill="#0a0a0a" stroke="#8f8a1c" />
      <path d={`M${x - 3} 544l2 2 2-2 2 2M${x - 5} 550l3 2 3-2 4 2M${x - 7} 556l4 1 4-2 4 2`} stroke="#3d3d3d" fill="none" />
      <path d={`M${x - 13} 561h26`} stroke="#dedec8" strokeWidth="3" strokeDasharray="2 1" />
      <path d={`M${x - 13} 559.500h26v3h-26z`} stroke="#aaa98d" fill="none" />
      <rect x={x - 2} y="531" width="4" height="7" fill="#3b6c86" stroke="#8f8a1c" />
    </g>
  );
}

function Post({ x, top }: { x: number; top: number }) {
  return (
    <g>
      <rect x={x - 2} y={top} width="4" height={531 - top} fill="#50565c" stroke="#eee" />
      <path d={`M${x} ${top}V531`} stroke="#fff" strokeWidth="2" strokeDasharray="2 2" />
      <rect x={x - 2.500} y={top} width="5" height="6" fill="#f1f1f1" />
    </g>
  );
}

function Door({ x, handle }: { x: number; handle: number }) {
  return (
    <g fill="none" stroke="#b9bbbd">
      <path d={`M${x + 0.5} 530v-64.500h26V530M${x + 2.5} 530v-57M${x + 24.5} 530v-57M${x + 2.5} 467.500h22v5h-22z`} />
      <rect x={x + 5.5} y="479.500" width="16" height="46" />
      {[481, 494, 507, 519].map((y) => <rect key={y} x={x + 6.5} y={y + 0.5} width="14" height="5" stroke="#e2e2e2" />)}
      <path d={`M${x + 5} 490.500h16M${x + 5} 503.500h16M${x + 5} 515.500h16M${handle} 499v6`} />
    </g>
  );
}

function SectionDrawing() {
  return (
    <g fill="none">
      <path d="M1032 334.500h239M1036.500 329v18M1121.500 329v18M1205.500 329v28M1034 337l5-5M1119 337l5-5M1203 337l5-5" stroke="#bfc1c3" />
      <rect x="1068" y="330" width="20" height="9" fill="#212830" /><rect x="1153" y="330" width="20" height="9" fill="#212830" />
      <g fontSize="8" fill="#eee" textAnchor="middle"><text x="1078" y="337">3.00</text><text x="1163" y="337">3.00</text></g>
      <path d="M1040 352v79M1078 352v79M1118 352v79M1039 370l79 47M1118 370l-79 47M1124 362v56M1163 362v56M1202 362v56M1124 378l78 24M1202 378l-78 24M1208 378v53M1208 385l63 19M1208 425l63-18" stroke="#152b8c" strokeWidth="2.500" />
      <path d="M1022 354.500h97M1124 364h98M1208 378h63" stroke="#152b8c" strokeWidth="4" />
      <path d="M1034 438.500h-14.500v-87h118v8h84v15h50" stroke="#9b0d38" />
      <path d="M1221.500 374.500h-14" stroke="#9b0d38" />
      <path d="M1038 431.500h83M1038 436.500h83M1123 417.500h82M1123 422.500h82M1207 431.500h64M1207 436.500h64M1077.500 437v93M1080.500 437v93" stroke="#a9acaf" />
      <rect x="1036" y="532" width="235" height="6" fill="#442e2c" />
      <path d="M1016 538.500h255" stroke="#55402f" />
      <path d="M1038 530.500h233" stroke="#a9a01b" strokeWidth="1.500" />
      <Post x={1036} top={352} /><Post x={1121} top={352} /><Post x={1205} top={360} />
      <g fill="#f4f4f4">
        <rect x="1033.500" y="430" width="5" height="7" /><rect x="1118.500" y="417" width="5" height="7" /><rect x="1118.500" y="430" width="5" height="7" />
        <rect x="1202.500" y="417" width="5" height="7" /><rect x="1202.500" y="430" width="5" height="7" />
      </g>
      <Door x={1090} handle={1093} /><Door x={1209} handle={1233} />
      <Footing x={1036} /><Footing x={1121} /><Footing x={1205} />
      <text x="1039" y="523" fontSize="6" fill="#eee">Muka Lantai</text>
      <text x="1063" y="528" fontSize="5" fontWeight="bold" fill="#ddd">±0.00</text>
    </g>
  );
}

function ViewCube() {
  return (
    <svg width="92" height="122" viewBox="1169 193 92 122" aria-label="View cube">
      <circle cx="1215" cy="241" r="36" fill="none" stroke="#454c55" strokeWidth="8" />
      <rect x="1198" y="224" width="34" height="34" fill="#abaeb1" />
      <rect x="1205" y="231" width="21" height="21" fill="#9ea6af" />
      <g textAnchor="middle" fontWeight="bold" fontFamily="Liberation Sans, sans-serif">
        <text x="1215" y="244" fontSize="8" fill="#38414d" fontFamily="Open Sans, sans-serif">TOP</text>
        <g fontSize="14" fill="#b9bcbf">
          <text x="1215" y="209">N</text><text x="1215" y="284">S</text><text x="1177" y="246">W</text><text x="1253" y="246">E</text>
        </g>
      </g>
      <rect x="1199.500" y="299.500" width="31" height="11" rx="2" fill="#a0a4ad" stroke="#838790" />
      <text x="1202" y="307" fontSize="7" fill="#3f4754">WCS</text>
      <path d="M1222 304h5" stroke="#d0d3d8" />
    </svg>
  );
}

function NavBar() {
  return (
    <svg width="22" height="142" viewBox="0 0 22 142" aria-label="Navigation bar">
      <rect x="0.500" y="0.500" width="21" height="141" rx="2" fill="#838688" fillOpacity="0.720" stroke="#777" />
      <g fill="none" stroke="#5f6265">
        <circle cx="18" cy="4" r="2" /><circle cx="18" cy="138" r="2" />
        <circle cx="11" cy="20" r="7" strokeWidth="1.500" /><circle cx="11" cy="20" r="3.500" />
        <path d="M7 55c-3-5-5-8-2-7l2 2v-7c2-1 2 0 2 5v-7c2-1 2 0 2 6v-5c2-1 2 0 2 6v-4c3-1 3 6 0 11z" />
        <path d="M3 60l11 11M16 60L4 73M3 63v-3h3M13 60h3v3M4 70v3h3" /><circle cx="14" cy="71" r="3" />
        <path d="M11 86v14M8 89l3-3 3 3M8 97l3 3 3-3M6 90c-5 2-5 5 0 6h10c4-2 3-5 0-6" />
        <path d="M3 114h4v4H3zM9 114h4v4H9zM15 114h3v4h-3zM3 120h11v9H3zM7 122l4 2.500-4 2.500z" />
      </g>
      <g fill="#5f6265">
        <rect x="10" y="33" width="2" height="2" /><rect x="10" y="79" width="2" height="2" /><rect x="10" y="105" width="2" height="2" />
      </g>
    </svg>
  );
}

function CommandLine() {
  return (
    <div className="flex h-[27px] w-full items-stretch rounded-sm border border-[#777] bg-white">
      <div className="flex w-[53px] items-center gap-2 rounded-l-sm bg-gradient-to-b from-[#777] to-[#3f3f3f] pl-1 text-white">
        <span className="h-5 border-l-2 border-dotted border-[#aaa]" />
        <button aria-label="Close command line"><X size={12} strokeWidth={4} /></button>
        <button aria-label="Customize"><Wrench size={14} fill="#ddd" className="-scale-x-100 text-[#ddd]" /></button>
      </div>
      <label className="flex flex-1 items-center gap-1 pl-1">
        <Icon size={16}><rect x="0.500" y="1.500" width="15" height="13" fill="#dbe3ea" stroke="#8b949c" /><path d="M3 5l4 3-4 3M8 12h5" stroke="#414e5b" strokeWidth="1.500" /></Icon>
        <Icon size={6}><path d="M0 1h6L3 5z" fill="#777" /></Icon>
        <input aria-label="Command" className="h-5 flex-1 text-[12px] text-black outline-none" />
      </label>
      <button aria-label="History" className="flex w-4 items-center justify-center">
        <Icon size={8}><path d="M0 6h8L4 2z" fill="#222" /></Icon>
      </button>
    </div>
  );
}

function ModelSpace() {
  return (
    <main className="flex min-h-0 flex-1 bg-[#212830]">
      <div className="relative min-w-0 flex-1 overflow-hidden">
        <svg viewBox="0 170 1271 482" preserveAspectRatio="xMinYMin slice" fill="none" className="absolute inset-0 h-full w-full">
          <path d="M264.500 170v482" stroke="#a31318" />
          <path d="M264 191.500h1007" stroke="#b5141a" />
          <path d="M976 170v482" stroke="#8c1b23" strokeWidth="2" />
          <path d="M302.500 660V219h658v440M1014 660V219H1271" stroke="#f4f4f4" strokeWidth="2" />
          <FloorPlan />
          <TitleBlock />
          <SectionDrawing />
          <path d="M922 489.500h28M958 489.500h29M954.500 457v28M954.500 493v28M951.500 486.500h6v6h-6z" stroke="#cfcfcf" />
          <path d="M11.500 606v29M15 638.500h29M8.500 635.500h6v6h-6zM12 595l4 4 4-4M16 599v5M47 630l8 9M55 630l-8 9" stroke="#b5b8bb" />
        </svg>
        <div className="absolute top-[3px] left-0 text-[8px] leading-[14px] text-[#e6e6e6]">[−][Top][2D Wireframe]</div>
        <div className="absolute top-[6px] right-[7px] flex gap-1 text-[#eee]">
          <button aria-label="Minimize drawing"><Icon size={9}><path d="M1 7h7" stroke="#eee" strokeWidth="2" /></Icon></button>
          <button aria-label="Restore drawing"><Icon size={9}><path d="M1.500 3.500h4v4h-4zM3 1.500h4.500V6" stroke="#eee" strokeWidth="1.500" /></Icon></button>
          <button aria-label="Close drawing"><Icon size={9}><path d="M2 2l5 6M7 2L2 8" stroke="#eee" strokeWidth="1.500" /></Icon></button>
        </div>
        <div className="absolute top-[23px] right-[10px]"><ViewCube /></div>
        <div className="absolute top-[158px] right-[2px]"><NavBar /></div>
        <div className="absolute right-[43px] bottom-[3px] text-[#868a8e]">
          <p className="text-[19px] leading-6">Activate Windows</p>
          <p className="text-[14px] leading-5">Go to Settings to activate Windows.</p>
        </div>
        <div className="absolute bottom-0 left-[377px] w-[526px]"><CommandLine /></div>
      </div>
      <div className="w-[6px] bg-[#b5d0ea]"><div className="h-[60px] bg-gradient-to-b from-[#b5d0ea] to-white" /></div>
      <div className="w-[3px] bg-[#2c3c46]" />
    </main>
  );
}

/* ---------- status bar ---------- */

function LayoutTab({ label, active }: { label: string; active?: boolean }) {
  return (
    <button className={`relative -ml-[5px] h-[18px] w-[68px] text-[12px] leading-[18px] ${active ? "font-bold text-white" : "text-[#b0b0b0]"}`}>
      <svg viewBox="0 0 68 18" preserveAspectRatio="none" className="absolute inset-0 h-full w-full" aria-hidden="true">
        <path d="M0 0h68c-6 2-5 18-12 18H14C6 18 7 3 0 0z" fill={active ? "#747474" : "#535353"} />
      </svg>
      <span className="relative">{label}</span>
    </button>
  );
}

function Cell({ width, children }: Kids & { width: string }) {
  return <div className={`flex h-[27px] shrink-0 items-center justify-around border border-[#777] bg-[#4d4d4d] ${width}`}>{children}</div>;
}

function Status({ name, children }: Kids & { name: string }) {
  return <button aria-label={name}><Icon>{children}</Icon></button>;
}

const person = "M9 1l2 6 1 3 5 5-2 2-6-4-6 4-2-2 5-5 1-3z";

function StatusBar() {
  return (
    <div className="flex h-7 shrink-0 items-start justify-between border-t border-[#666] bg-[#393939]">
      <div className="flex pl-[11px]">
        <LayoutTab label="Model" active />
        <LayoutTab label="Layout1" />
        <LayoutTab label="Layout2" />
        <button aria-label="New layout" className="ml-1 flex h-[18px] w-6 items-center justify-center rounded-br-xl bg-[#555]">
          <Icon size={10}><path d="M5 1v8M1 5h8" stroke="#bbb" strokeWidth="2" /></Icon>
        </button>
      </div>
      <div className="flex gap-px">
        <Cell width="w-[51px]"><button className="text-[12px] text-white">MODEL</button></Cell>
        <Cell width="w-[65px]">
          <Status name="Grid"><path d="M5 2v14M9 2v14M13 2v14M2 5h14M2 9h14M2 13h14" stroke="#b8b8b8" /></Status>
          <Status name="Snap"><path d="M2 3h14M2 7h14M2 11h14M2 15h14" stroke="#b8b8b8" strokeWidth="1.500" strokeDasharray="1.500 2" /></Status>
          <Caret />
        </Cell>
        <Cell width="w-[103px]">
          <Status name="Ortho"><path d="M4 2v13h13M4 10h5v5" stroke="#1f8cf2" strokeWidth="2" /></Status>
          <Status name="Polar tracking"><circle cx="8" cy="9" r="6" stroke="#bbb" strokeWidth="1.500" /><path d="M8 9h9M8 9l5-6" stroke="#bbb" /></Status>
          <Caret />
          <Status name="Isodraft"><path d="M2 2l14 15M8 1v7M10 12v5" stroke="#bbb" strokeWidth="1.500" /></Status>
          <Caret />
        </Cell>
        <Cell width="w-[65px]">
          <Status name="Object tracking"><path d="M16 3L3 15h13" stroke="#bbb" strokeWidth="1.500" /></Status>
          <Status name="Object snap"><rect x="4" y="4" width="12" height="11" stroke="#1f8cf2" strokeWidth="2" /><circle cx="4" cy="4" r="2.500" fill="#083" stroke="#1b1b1b" /></Status>
          <Caret />
        </Cell>
        <Cell width="w-[106px]">
          <Status name="Annotation visibility"><path d={person} fill="#1f8cf2" /><circle cx="11" cy="4" r="3" fill="#1f8cf2" stroke="#4ba9ff" /></Status>
          <Status name="Auto scale"><path d={person} fill="#b5b5b5" /><path d="M14 1l-2 4h3l-3 4" stroke="#ddd" /></Status>
          <Status name="Annotation scale"><path d={person} fill="#b5b5b5" /></Status>
          <button className="flex items-center gap-1 text-[12px] text-white">1:1 <Caret /></button>
        </Cell>
        <Cell width="w-[41px]">
          <Status name="Workspace"><circle cx="9" cy="9" r="3.500" stroke="#c2c2c2" strokeWidth="3" /><circle cx="9" cy="9" r="5.500" stroke="#c2c2c2" strokeWidth="2" strokeDasharray="2.300 2" /></Status>
          <Caret />
        </Cell>
        <Cell width="w-[25px]"><Status name="Annotation monitor"><path d="M9 2v14M2 9h14" stroke="#c5c5c5" strokeWidth="2" /></Status></Cell>
        <Cell width="w-[27px]"><Status name="Quick properties"><path d="M2 2h7v7H2zM6 16l3-6 4 6z" stroke="#bbb" /><circle cx="13" cy="8" r="3" stroke="#bbb" /></Status></Cell>
        <Cell width="w-[28px]"><Status name="Performance"><circle cx="9" cy="9" r="8" fill="#0a67bd" stroke="#1e85e6" /><path d="M9 9l4-4" stroke="#0b3c70" strokeWidth="2" /></Status></Cell>
        <Cell width="w-[49px]">
          <Status name="Isolate objects"><rect x="1" y="1" width="15" height="15" fill="#eee" stroke="#777" /><path d="M3 14c3 0 3-9 6-9s3 9 6 9" stroke="#333" /><path d="M13 9l5 8H9z" fill="#e8541b" /></Status>
          <Status name="Trusted DWG"><rect x="2" y="7" width="10" height="7" fill="#e8c432" /><path d="M4 1h6l2 6H3z" fill="#9fc4ea" /><path d="M8 13l3 3 6-7" stroke="#34b12e" strokeWidth="2.500" /></Status>
        </Cell>
        <Cell width="w-[49px]">
          <Status name="Clean screen"><rect x="1" y="3" width="15" height="12" stroke="#d2d2d2" strokeWidth="1.500" /><path d="M4 12l4-3-4-1zM13 6l-4 3h4z" fill="#d2d2d2" stroke="#d2d2d2" /></Status>
          <Status name="Customization"><path d="M2 4h14M2 9h14M2 14h14" stroke="#c9c9c9" strokeWidth="2" /></Status>
        </Cell>
      </div>
    </div>
  );
}

/* ---------- Windows task bar ---------- */

const pinned: { name: string; style: string; icon: ReactNode }[] = [
  {
    name: "Edge",
    style: "border-transparent",
    icon: (
      <Icon size={26}>
        <circle cx="13" cy="13" r="12" fill="#1b82d2" />
        <path d="M1 12C2 5 7 1 13 1c8 0 12 5 12 10 0 4-4 6-8 5-3-1 0-2 0-5 0-2-2-4-6-4-5 0-9 3-10 5z" fill="#35b8c4" />
        <path d="M14 1c7 0 11 5 11 10 0 3-3 5-6 5-2-1 0-2 0-5 0-4-4-6-9-6z" fill="#58d67a" />
        <path d="M9 10c-3 5 0 14 9 14 3-1 5-3 6-5-5 3-12 1-11-5 0-2 1-2 1-4-1-2-3-2-5 0z" fill="#0c4f9a" />
        <path d="M14 11c-2 4 0 7 4 8 3 0 5 0 7-2-4 1-9 0-9-2 0-1 1-2 0-4z" fill="#031419" />
      </Icon>
    ),
  },
  {
    name: "Store",
    style: "border-transparent",
    icon: (
      <Icon size={26}>
        <path d="M9 8V4c0-4 8-4 8 0v4" stroke="#fff" strokeWidth="1.500" />
        <path d="M1 7h24v16c0 2-1 2-3 2H4c-2 0-3 0-3-2z" fill="#fff" />
        <path d="M8 10h5v5H8z" fill="#e8512a" /><path d="M14 10h5v5h-5z" fill="#7cb82f" />
        <path d="M8 16h5v5H8z" fill="#2a9fe0" /><path d="M14 16h5v5h-5z" fill="#f5b71e" />
      </Icon>
    ),
  },
  {
    name: "Chrome",
    style: "border-[#76b9ed]",
    icon: (
      <Icon size={26}>
        <circle cx="13" cy="13" r="11" fill="#f8c930" />
        <path d="M3.500 7.500A11 11 0 0 1 22.500 7.500H13l-4.500 8z" fill="#e0453a" />
        <path d="M3.500 7.500A11 11 0 0 0 12.500 24l5-9-9 0z" fill="#2ea44f" />
        <circle cx="13" cy="13" r="5.500" fill="#fff" /><circle cx="13" cy="13" r="4.300" fill="#4688f1" />
      </Icon>
    ),
  },
  {
    name: "File Explorer",
    style: "border-[#76b9ed]",
    icon: (
      <Icon size={26}>
        <path d="M2 3h8l2 3h12v16H2z" fill="#f3c84f" /><path d="M2 7h22v15H2z" fill="#fde08a" />
        <path d="M6 23v-8c0-1 1-2 2-2h10c1 0 2 1 2 2v8h-4v-5h-6v5z" fill="#3fa8dc" />
      </Icon>
    ),
  },
];

function TaskBar() {
  return (
    <footer className="flex h-10 shrink-0 items-stretch justify-between bg-[#041419] text-white">
      <div className="flex">
        <button aria-label="Start menu" className="flex w-12 items-center justify-center">
          <Icon size={16}><path d="M0 2.300l7-1V7.500H0zM8 1.200l8-1.200v7.500H8zM0 8.500h7v6.200l-7-1zM8 8.500h8V16l-8-1.200z" fill="#fff" /></Icon>
        </button>
        <button aria-label="Search Windows" className="flex w-12 items-center justify-center"><Search size={18} strokeWidth={1.500} className="-scale-x-100" /></button>
        <button aria-label="Task view" className="flex w-[50px] items-center justify-center">
          <Icon><path d="M1.500 1v3h10V1M1.500 6.500h10v6h-10zM1.500 17v-3h10v3M15.500 1v16" stroke="#ddd" /><path d="M14 6h3v3h-3z" fill="#fff" /></Icon>
        </button>
        {pinned.map((p) => (
          <button key={p.name} aria-label={p.name} className="flex w-[50px] justify-center">
            <span className={`flex h-full w-[42px] items-center justify-center border-b-[3px] pt-[2px] ${p.style}`}>{p.icon}</span>
          </button>
        ))}
        <button aria-label="AutoCAD" className="flex w-[50px] items-center justify-center border-b-[3px] border-[#76b9ed] bg-[#3b494e] pt-[2px]">
          <Icon size={24}>
            <rect width="24" height="24" fill="#f6e4df" />
            <path d="M4 21L9 3h6l5 18h-4l-1-4H9l-2 4zM10 13h4l-2-6z" fill="#b5202a" fillRule="evenodd" />
            <path d="M9.500 4L13 5 7 19" stroke="#d9504f" />
          </Icon>
        </button>
      </div>
      <div className="flex items-center">
        <button aria-label="People" className="mr-5">
          <Icon><circle cx="6" cy="8" r="2.500" stroke="#fff" /><path d="M2 16c0-7 8-7 8 0" stroke="#fff" /><circle cx="12" cy="4" r="2.500" stroke="#fff" /><path d="M9 8c3-2 7-1 7 4" stroke="#fff" /></Icon>
        </button>
        <button aria-label="Hidden icons" className="mr-1.5"><ChevronUp size={18} strokeWidth={1.500} /></button>
        <span className="mr-2">
          <Icon><path d="M5.500 5.500h11v8h-11z" stroke="#fff" /><path d="M8 7h5v5H8z" fill="#fff" /><path d="M3 2v3M6 2v3M2 5h5v3H2zM4.500 8v5" stroke="#fff" /></Icon>
        </span>
        <span className="mr-1.5">
          <Icon size={16}><path d="M2 15C2 8 8 2 15 2M5 15C5 10 10 5 15 5M8 15c0-4 3-7 7-7M11 15c0-2 2-4 4-4" stroke="#ddd" /><circle cx="14" cy="14" r="1.500" fill="#fff" /></Icon>
        </span>
        <time className="w-[66px] text-center text-[12px] leading-[18px]">
          2:59 PM
          <br />
          6/20/2020
        </time>
        <button aria-label="Notifications" className="mr-5 ml-3">
          <Icon><path d="M1 2h16v12h-4l-3 3v-3H1z" fill="#fff" /><path d="M4 5.500h10M4 8.500h10M4 11h6" stroke="#041419" /></Icon>
        </button>
        <span className="mr-1 h-full w-px bg-[#4d585c]" />
      </div>
    </footer>
  );
}

export default function App() {
  return (
    <div className="flex h-screen w-full flex-col overflow-hidden bg-[#393939] font-['Open_Sans','Noto_Sans',sans-serif]">
      <Header />
      <Ribbon />
      <FileTabs />
      <ModelSpace />
      <StatusBar />
      <TaskBar />
    </div>
  );
}
